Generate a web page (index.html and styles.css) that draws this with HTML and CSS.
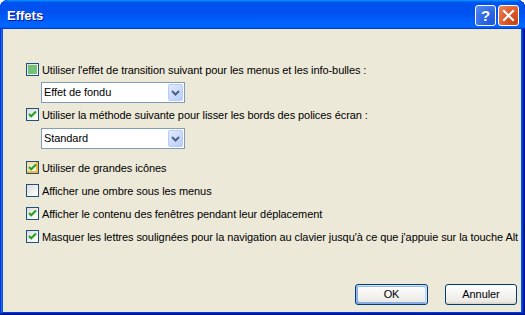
FILE: index.html
```html
<!DOCTYPE html>
<html lang="fr">
<head>
<meta charset="utf-8">
<title>Effets</title>
<link rel="stylesheet" href="styles.css">
</head>
<body>
<div class="window">
  <div class="titlebar">
    <span class="title">Effets</span>
    <div class="controls">
      <div class="ctl help">?</div>
      <div class="ctl close">
        <svg width="19" height="19" viewBox="0 0 19 19"><path d="M5 5 L14 14 M14 5 L5 14" stroke="#fff" stroke-width="2.2" stroke-linecap="square" fill="none"/></svg>
      </div>
    </div>
  </div>
  <div class="body">
    <div class="row first">
      <span class="cb"><span class="mixed"></span></span>
      <span class="label">Utiliser l'effet de transition suivant pour les menus et les info-bulles :</span>
    </div>
    <div class="select s1">
      <span class="val">Effet de fondu</span>
      <span class="drop"><svg width="13" height="15" viewBox="0 0 13 15"><path d="M3 6 L6.5 9.5 L10 6" stroke="#4D6185" stroke-width="2" fill="none"/></svg></span>
    </div>
    <div class="row r2">
      <span class="cb"><svg width="11" height="11" viewBox="0 0 11 11"><path d="M2 5 L4.2 7.3 L9 2.5" stroke="#21A121" stroke-width="2" fill="none"/></svg></span>
      <span class="label">Utiliser la méthode suivante pour lisser les bords des polices écran :</span>
    </div>
    <div class="select s2">
      <span class="val">Standard</span>
      <span class="drop"><svg width="13" height="15" viewBox="0 0 13 15"><path d="M3 6 L6.5 9.5 L10 6" stroke="#4D6185" stroke-width="2" fill="none"/></svg></span>
    </div>
    <div class="row r3">
      <span class="cb hover"><svg width="11" height="11" viewBox="0 0 11 11"><path d="M2 5 L4.2 7.3 L9 2.5" stroke="#21A121" stroke-width="2" fill="none"/></svg></span>
      <span class="label">Utiliser de grandes icônes</span>
    </div>
    <div class="row rn">
      <span class="cb"></span>
      <span class="label">Afficher une ombre sous les menus</span>
    </div>
    <div class="row rn">
      <span class="cb"><svg width="11" height="11" viewBox="0 0 11 11"><path d="M2 5 L4.2 7.3 L9 2.5" stroke="#21A121" stroke-width="2" fill="none"/></svg></span>
      <span class="label">Afficher le contenu des fenêtres pendant leur déplacement</span>
    </div>
    <div class="row rn">
      <span class="cb"><svg width="11" height="11" viewBox="0 0 11 11"><path d="M2 5 L4.2 7.3 L9 2.5" stroke="#21A121" stroke-width="2" fill="none"/></svg></span>
      <span class="label">Masquer les lettres soulignées pour la navigation au clavier jusqu'à ce que j'appuie sur la touche Alt</span>
    </div>
    <div class="buttons">
      <div class="btn ok">OK</div>
      <div class="btn cancel">Annuler</div>
    </div>
  </div>
</div>
</body>
</html>
```

FILE: styles.css
```css
* { box-sizing: border-box; }
html, body { margin: 0; padding: 0; background: #fff; }

.window {
  width: 525px;
  height: 315px;
  display: flex;
  flex-direction: column;
  background: #0055E5;
  border-radius: 8px 8px 0 0;
  overflow: hidden;
  box-shadow: inset -1px -1px #00138c, inset 1px 1px #0831d9, inset -2px -2px #001ea0, inset 2px 2px #166aee, inset -3px -3px #003bda, inset 3px 3px #0855dd;
}

.titlebar {
  height: 29px;
  flex: none;
  display: flex;
  align-items: flex-start;
  padding: 0 6px 0 7px;
  border-radius: 8px 8px 0 0;
  background: linear-gradient(180deg, #0997ff, #0053ee 8%, #0050ee 40%, #0066ff 88%, #0066ff 93%, #005bff 95%, #003dd7 96%, #003dd7);
}

.title {
  font: bold 13px "Liberation Sans", Arial, sans-serif;
  color: #fff;
  line-height: 15px;
  margin-top: 8px;
  text-shadow: 1px 1px #0f1089;
  flex: 1;
}

.controls {
  display: flex;
  gap: 2px;
  margin-top: 5px;
}

.ctl {
  width: 21px;
  height: 21px;
  border: 1px solid #fff;
  border-radius: 3px;
  display: flex;
  align-items: center;
  justify-content: center;
}

.help {
  background: radial-gradient(circle at 85% 85%, #1D5AE0 0%, #2F68E2 45%, #5A8AEE 100%);
  color: #fff;
  font: bold 15px "Liberation Sans", Arial, sans-serif;
  line-height: 19px;
}

.close {
  background: radial-gradient(circle at 85% 85%, #C64311 0%, #DD5A2C 50%, #EB8A63 100%);
}

.body {
  flex: 1;
  margin: 0 4px 3px 3px;
  background: #ECE9D8;
  display: flex;
  flex-direction: column;
  padding: 34px 4px 7px 23px;
  font: 11px "Liberation Sans", Arial, sans-serif;
  letter-spacing: -0.08px;
  color: #000;
}

.row {
  display: flex;
  align-items: flex-start;
  height: 13px;
  flex: none;
}

.r2 { margin-top: 5px; }
.r3 { margin-top: 12px; }
.rn { margin-top: 10px; }

.cb {
  width: 13px;
  height: 13px;
  flex: none;
  border: 1px solid #1C5180;
  background: linear-gradient(135deg, #DCDCD7, #fff);
  display: flex;
  align-items: center;
  justify-content: center;
}

.cb.hover {
  box-shadow: inset -2px -2px #f8b636, inset 2px 2px #fedf9c;
}

.mixed {
  width: 9px;
  height: 9px;
  background: #73C277;
}

.label {
  margin-left: 3px;
  line-height: 15px;
  white-space: nowrap;
}

.select {
  width: 144px;
  height: 21px;
  flex: none;
  margin-left: 15px;
  border: 1px solid #7F9DB9;
  background: #fff;
  display: flex;
  align-items: center;
  padding: 0 1px 0 2px;
}

.s1 { margin-top: 6px; }
.s2 { margin-top: 7px; }

.val {
  flex: 1;
  line-height: 19px;
}

.drop {
  width: 15px;
  height: 17px;
  border: 1px solid #B7CCF9;
  border-radius: 2px;
  background: linear-gradient(135deg, #E2EAFE, #B9CDF9);
  display: flex;
  align-items: center;
  justify-content: center;
}

.buttons {
  margin-top: auto;
  display: flex;
  justify-content: flex-end;
  gap: 17px;
}

.btn {
  height: 21px;
  border: 1px solid #003C74;
  border-radius: 3px;
  background: linear-gradient(180deg, #fff, #ecebe6 86%, #d6d0c5);
  display: flex;
  align-items: center;
  justify-content: center;
  line-height: 13px;
}

.ok {
  width: 73px;
  box-shadow: inset -1px 1px #cee7ff, inset 1px 2px #98b8ea, inset -2px 2px #bcd4f6, inset 1px -1px #89ade4, inset 2px -2px #89ade4;
}

.cancel { width: 72px; }
```
